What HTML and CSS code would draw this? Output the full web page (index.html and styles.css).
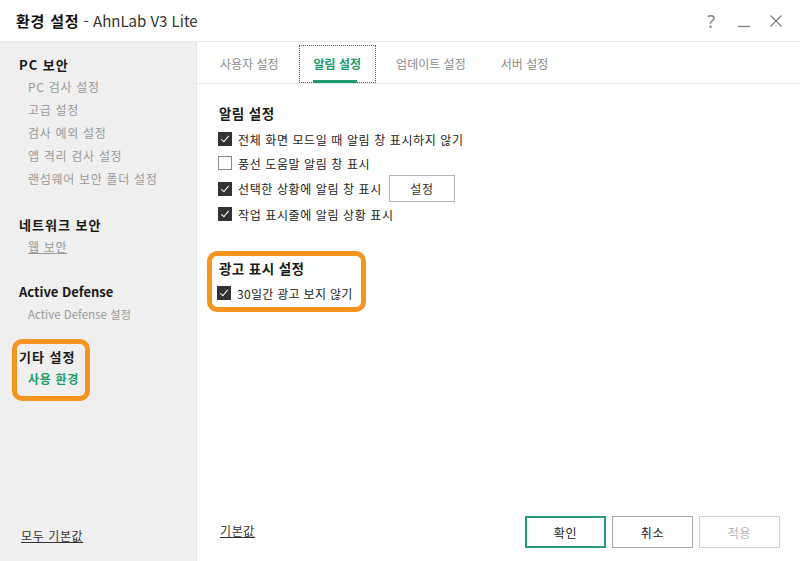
FILE: index.html
```html
<!DOCTYPE html>
<html lang="ko">
<head>
  <meta charset="UTF-8">
  <title>환경 설정 - AhnLab V3 Lite</title>
  <link rel="stylesheet" href="styles.css">
</head>
<body>
  <div class="window">
    <header class="titlebar">
      <div class="title"><b>환경 설정</b> - AhnLab V3 Lite</div>
      <div class="win-btns">
        <span class="help">?</span>
        <svg width="14" height="14" viewBox="0 0 14 14"><path d="M1 12.5h12" stroke="#777" stroke-width="1.2"/></svg>
        <svg width="14" height="14" viewBox="0 0 14 14"><path d="M1.5 1.5l11 11M12.5 1.5l-11 11" stroke="#777" stroke-width="1.1"/></svg>
      </div>
    </header>

    <div class="body">
      <aside class="sidebar">
        <div class="group">
          <div class="group-title">PC 보안</div>
          <div class="item">PC 검사 설정</div>
          <div class="item">고급 설정</div>
          <div class="item">검사 예외 설정</div>
          <div class="item">앱 격리 검사 설정</div>
          <div class="item">랜섬웨어 보안 폴더 설정</div>
        </div>
        <div class="group">
          <div class="group-title">네트워크 보안</div>
          <div class="item link">웹 보안</div>
        </div>
        <div class="group">
          <div class="group-title latin">Active Defense</div>
          <div class="item latin">Active Defense 설정</div>
        </div>
        <div class="group highlight">
          <div class="group-title">기타 설정</div>
          <div class="item active">사용 환경</div>
        </div>
        <div class="side-footer"><a class="reset-link">모두 기본값</a></div>
      </aside>

      <main class="main">
        <nav class="tabs">
          <div class="tab">사용자 설정</div>
          <div class="tab active">알림 설정</div>
          <div class="tab">업데이트 설정</div>
          <div class="tab">서버 설정</div>
        </nav>

        <div class="content">
          <section class="section">
            <h2>알림 설정</h2>
            <label class="row"><span class="check on"></span>전체 화면 모드일 때 알림 창 표시하지 않기</label>
            <label class="row"><span class="check"></span>풍선 도움말 알림 창 표시</label>
            <label class="row"><span class="check on"></span>선택한 상황에 알림 창 표시<button class="small-btn">설정</button></label>
            <label class="row"><span class="check on"></span>작업 표시줄에 알림 상황 표시</label>
          </section>

          <section class="section highlight">
            <h2>광고 표시 설정</h2>
            <label class="row"><span class="check on"></span>30일간 광고 보지 않기</label>
          </section>
        </div>

        <footer class="footer">
          <a class="reset-link">기본값</a>
          <div class="actions">
            <button class="btn primary">확인</button>
            <button class="btn">취소</button>
            <button class="btn" disabled>적용</button>
          </div>
        </footer>
      </main>
    </div>
  </div>
</body>
</html>
```

FILE: styles.css
```css
* {
  box-sizing: border-box;
}

body {
  margin: 0;
  font-family: "Noto Sans CJK KR", "Noto Sans", sans-serif;
  color: #222;
  background: #fff;
}

.window {
  width: 800px;
  height: 561px;
  display: flex;
  flex-direction: column;
}

.titlebar {
  height: 42px;
  display: flex;
  align-items: center;
  justify-content: space-between;
  padding: 0 17px 0 16px;
  border-bottom: 1px solid #e6e6e6;
}

.title {
  font-size: 15px;
  color: #333;
}

.title b {
  color: #111;
  letter-spacing: 0.8px;
}

.win-btns {
  display: flex;
  align-items: center;
  gap: 18px;
}

.help {
  margin-right: 4px;
  font-family: "Noto Sans", sans-serif;
  font-size: 18px;
  line-height: 18px;
  color: #8a8a8a;
}

.body {
  flex: 1;
  display: flex;
}

/* sidebar */
.sidebar {
  width: 197px;
  background: #efefef;
  border-right: 1px solid #e2e2e2;
  padding: 13px 0 0 0;
  display: flex;
  flex-direction: column;
}

.group {
  padding-left: 19px;
  margin-bottom: 25px;
}

.group-title {
  font-size: 13px;
  font-weight: bold;
  line-height: 20px;
  color: #1a1a1a;
  letter-spacing: 1px;
}

.item {
  font-size: 12px;
  line-height: 23px;
  padding-left: 9px;
  color: #9a9a9a;
  letter-spacing: 0.7px;
}

.group-title.latin,
.item.latin {
  letter-spacing: 0;
}

.group-title.latin {
  margin-top: -1px;
  margin-bottom: 1px;
}

.item.latin {
  font-size: 11.5px;
}

.item.link {
  text-decoration: underline;
}

.item.active {
  color: #1d9b6c;
  font-weight: bold;
}

.group.highlight {
  width: 78px;
  margin: -12px 0 0 12px;
  padding: 3px 0 6px 2px;
  border: 5px solid #f5951f;
  border-radius: 10px;
}

.side-footer {
  margin-top: auto;
  height: 58px;
  padding: 19px 0 0 21px;
}

.reset-link {
  font-size: 12px;
  color: #333;
  text-decoration: underline;
  letter-spacing: 0.6px;
}

/* main panel */
.main {
  flex: 1;
  display: flex;
  flex-direction: column;
}

.tabs {
  height: 42px;
  display: flex;
  gap: 5px;
  padding: 3px 0 0 8px;
  border-bottom: 1px solid #e6e6e6;
}

.tab {
  position: relative;
  padding: 0 14px;
  height: 38px;
  line-height: 36px;
  font-size: 12px;
  color: #8c8c8c;
  border: 1px solid transparent;
}

.tab.active {
  color: #1d9b6c;
  font-weight: bold;
  border: 1px dotted #555;
}

.tab.active::after {
  content: "";
  position: absolute;
  left: 13px;
  right: 18px;
  bottom: -1px;
  height: 3px;
  background: #1d9b6c;
}

.content {
  flex: 1;
  padding: 19px 0 0 22px;
}

.section h2 {
  margin: 0 0 4px;
  font-size: 13.5px;
  line-height: 20px;
  color: #1a1a1a;
  letter-spacing: 0.4px;
}

.row {
  display: flex;
  align-items: center;
  min-height: 24px;
  font-size: 12px;
  color: #222;
  letter-spacing: 0.6px;
}

.check {
  width: 14px;
  height: 14px;
  margin: 0 6px 0 -1px;
  border: 1px solid #8a8a8a;
  background: #fff;
  position: relative;
}

.check.on {
  background: #333;
  border-color: #333;
}

.check.on::after {
  content: "";
  position: absolute;
  left: 4px;
  top: 1px;
  width: 3px;
  height: 7px;
  border: solid #fff;
  border-width: 0 1.2px 1.2px 0;
  transform: rotate(40deg);
}

.small-btn {
  margin-left: 7px;
  width: 66px;
  height: 27px;
  background: #fff;
  border: 1px solid #b4b4b4;
  font-family: inherit;
  font-size: 12px;
  color: #333;
  letter-spacing: 0.6px;
}

.section.highlight {
  display: inline-block;
  width: 159px;
  margin: 25px 0 0 -12px;
  padding: 2px 0 2px 7px;
  border: 5px solid #f5951f;
  border-radius: 10px;
}

.section.highlight h2 {
  margin-bottom: 3px;
}

.section.highlight .row {
  letter-spacing: 0.3px;
}

.section.highlight .check {
  margin-left: -2px;
}

.footer {
  height: 58px;
  display: flex;
  align-items: flex-start;
  justify-content: space-between;
  padding: 13px 20px 0 23px;
}

.footer .reset-link {
  margin-top: 6px;
}

.actions {
  display: flex;
  gap: 6px;
}

.btn {
  width: 81px;
  height: 32px;
  background: #fff;
  border: 1px solid #a8a8a8;
  font-family: inherit;
  font-size: 12px;
  color: #222;
  letter-spacing: 0.6px;
}

.btn.primary {
  border: 2px solid #1f9d6e;
}

.btn:disabled {
  border-color: #cfcfcf;
  color: #b5b5b5;
}
```
